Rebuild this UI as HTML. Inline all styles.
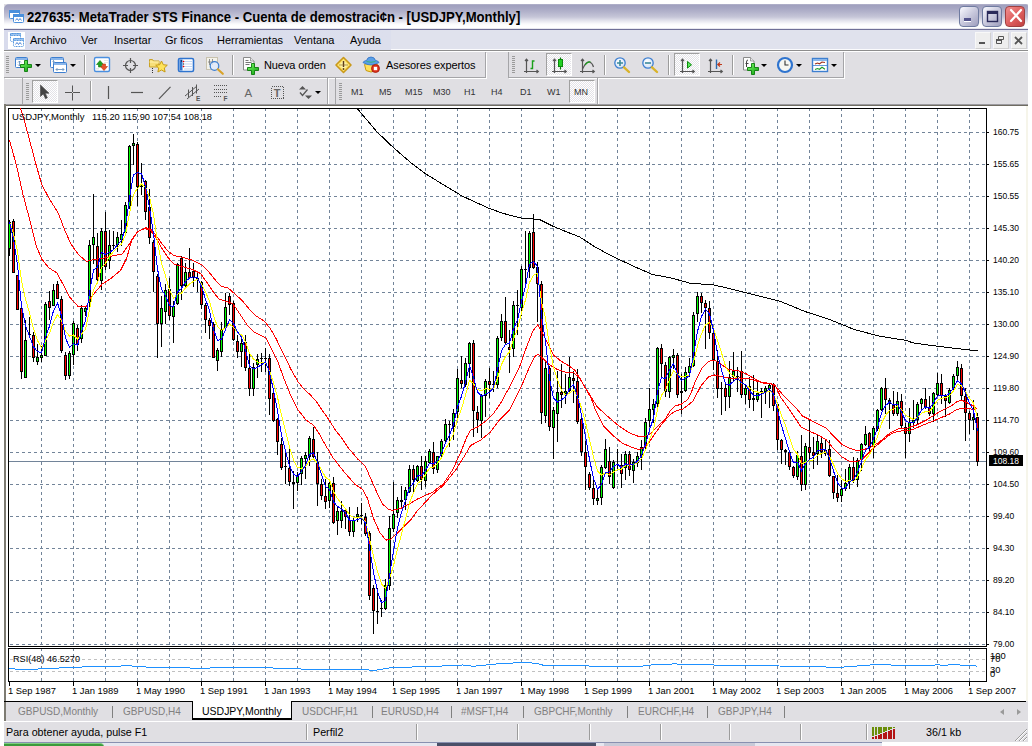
<!DOCTYPE html>
<html lang="es"><head><meta charset="utf-8"><title>227635: MetaTrader STS Finance</title>
<style>
*{box-sizing:border-box;margin:0;padding:0}
html,body{width:1032px;height:746px;overflow:hidden;background:#fff}
body{position:relative;font-family:"Liberation Sans",sans-serif;font-size:11px;color:#000}
.abs{position:absolute}
#win{position:absolute;left:4px;top:4px;width:1024px;height:738px;background:#e0dfe3}
#title{position:absolute;left:0;top:0;width:1024px;height:25px;background:linear-gradient(to bottom,#b4b4cc 0%,#a1a1bf 6%,#a6a6c3 16%,#b3b3cb 32%,#c6c6d8 52%,#e6e6ee 68%,#fafafc 80%,#ffffff 88%,#ffffff 94%,#dcdce6 100%);border-radius:5px 2px 0 0}
#title .txt{position:absolute;left:23px;top:4px;font-weight:bold;font-size:14px;line-height:18px;white-space:nowrap;color:#000;transform:scaleX(.9365);transform-origin:0 0}
#tline{position:absolute;left:0;top:25px;width:1024px;height:1px;background:#6f6f97}
.wbtn{position:absolute;top:2px;width:20px;height:21px;border-radius:4px;border:1px solid #6f7ba0;background:linear-gradient(135deg,#fafaff 0%,#c9c9dd 50%,#9e9ebd 100%)}
#menubar{position:absolute;left:0;top:26px;width:1024px;height:20px;background:#e0e2ed;border-bottom:1px solid #fbfbfd}
#menubar .bl{position:absolute;left:0;top:0;width:387px;height:20px;background:linear-gradient(to right,#d8dbec,#dcdfed)}
.mi{position:absolute;top:4px;font-size:11px;line-height:13px;white-space:nowrap}
.mdib{position:absolute;top:2px;width:16px;height:17px;background:#eeeeee;border:1px solid #f8f8f8;border-right-color:#d0d0d0;border-bottom-color:#d0d0d0}
#sep1{position:absolute;left:0;top:46px;width:1024px;height:1px;background:#8d8d8d}
#sep1b{position:absolute;left:0;top:47px;width:1024px;height:1px;background:#fff}
.tbgroup{position:absolute;height:26px;border-right:1px solid #a5a5a8;border-bottom:1px solid #a5a5a8;box-shadow:1px 1px 0 #fff}
.grip{position:absolute;width:3px;height:17px;background:repeating-linear-gradient(to bottom,#9a9a9a 0,#9a9a9a 1px,transparent 1px,transparent 2px)}
.vsep{position:absolute;width:1px;height:20px;background:#9c9c9c;box-shadow:1px 0 0 #fff}
.tbtxt{position:absolute;margin-top:1px;letter-spacing:-0.1px;font-size:11px;line-height:13px;white-space:nowrap}
.pressed{position:absolute;background:#f0f0f3 repeating-conic-gradient(#ffffff 0 25%,#e3e2e7 0 50%) 0 0/2px 2px;border:1px solid #a0a0a0;border-right-color:#fff;border-bottom-color:#fff}
.dd{position:absolute;width:0;height:0;border-left:3px solid transparent;border-right:3px solid transparent;border-top:3px solid #000}
.tf{position:absolute;font-size:9px;line-height:11px;color:#333;white-space:nowrap}
#chartwrap{position:absolute;left:0;top:100px;width:1024px;height:597px;background:#fff;border-left:2px solid #7d7b72;box-shadow:inset 0 1px 0 #9c9ba0,inset 0 2px 0 #6f6c62}
#tabs{position:absolute;left:0;top:697px;width:1022px;height:20px;background:#e0dfe3;border-top:1px solid #000;box-shadow:inset 2px 0 0 #7d7b72}
.tab{position:absolute;top:3px;font-size:11px;line-height:13px;color:#808080;white-space:nowrap;transform:scaleX(.91);transform-origin:0 0}
.tsep{position:absolute;top:4px;width:1px;height:12px;background:#808080}
#acttab{position:absolute;left:188px;top:-1px;width:100px;height:19px;background:#fff;border:1px solid #000;border-top:none;border-bottom-width:2px}
#acttab span{position:absolute;left:9px;top:4px;color:#000;font-size:11px;line-height:13px;white-space:nowrap;transform:scaleX(.953);transform-origin:0 0}
#status{position:absolute;left:0;top:717px;width:1024px;height:21px;background:#e0dfe3;border-top:1px solid #fff}
.st{position:absolute;top:4px;font-size:11px;line-height:13px;white-space:nowrap;transform:scaleX(.975);transform-origin:0 0}
.ssep{position:absolute;top:2px;width:1px;height:16px;background:#9c9c9c;box-shadow:1px 0 0 #fff}
svg{position:absolute;overflow:visible}
svg text{font-family:"Liberation Sans",sans-serif}

.sarr{position:absolute;top:7px;width:0;height:0;border-top:3px solid transparent;border-bottom:3px solid transparent}
#taskbar{position:absolute;left:4px;top:742px;width:878px;height:4px;background:#e6e7f0;border-top:1px solid #8890b0}
#taskbar i{position:absolute;top:0;height:4px;display:block}
#cream{position:absolute;left:1022px;top:102px;width:2px;height:595px;background:#f6f5ea}

</style></head>
<body>
<div id="win">
 <div id="title">
  <div class="txt">227635: MetaTrader STS Finance - Cuenta de demostraci&cent;n - [USDJPY,Monthly]</div>
  <div class="wbtn" style="left:955px"></div>
  <div class="wbtn" style="left:978px"></div>
  <div class="wbtn" style="left:1001px;border-color:#a04040;background:linear-gradient(135deg,#f09090 0%,#e06060 50%,#c04040 100%)"></div>
 </div>
 <div id="tline"></div>
 <div id="menubar">
  <div class="bl"></div>
  <div class="mi" style="left:26px">Archivo</div>
  <div class="mi" style="left:77px">Ver</div>
  <div class="mi" style="left:110px">Insertar</div>
  <div class="mi" style="left:161px">Gr&nbsp;ficos</div>
  <div class="mi" style="left:213px">Herramientas</div>
  <div class="mi" style="left:290px">Ventana</div>
  <div class="mi" style="left:346px">Ayuda</div>
  <div class="mdib" style="left:971px"></div>
  <div class="mdib" style="left:989px"></div>
  <div class="mdib" style="left:1007px"></div>
 </div>
 <div id="sep1"></div><div id="sep1b"></div>
 <div class="tbgroup" style="left:0;top:48px;width:482px"></div>
<div class="tbgroup" style="left:504px;top:48px;width:336px;border-left:1px solid #a5a5a8"></div>
<div class="tbgroup" style="left:18px;top:74px;width:306px;border-left:1px solid #a5a5a8;border-bottom:none;height:26px"></div>
<div class="tbgroup" style="left:331px;top:74px;width:263px;border-left:1px solid #a5a5a8;border-bottom:none;height:26px"></div>
<div class="grip" style="left:2px;top:52px"></div>
<div class="grip" style="left:508px;top:52px"></div>
<div class="grip" style="left:22px;top:79px"></div>
<div class="grip" style="left:335px;top:79px"></div>
<div class="vsep" style="left:80px;top:51px"></div>
<div class="vsep" style="left:228px;top:51px"></div>
<div class="vsep" style="left:600px;top:51px"></div>
<div class="vsep" style="left:664px;top:51px"></div>
<div class="vsep" style="left:728px;top:51px"></div>
<div class="vsep" style="left:86px;top:77px"></div>
<div class="pressed" style="left:542px;top:49px;width:26px;height:23px"></div>
<div class="pressed" style="left:670px;top:49px;width:26px;height:23px"></div>
<div class="pressed" style="left:28px;top:76px;width:26px;height:23px"></div>
<div class="pressed" style="left:565px;top:76px;width:26px;height:23px"></div>
<div class="tbtxt" style="left:260px;top:54px">Nueva orden</div>
<div class="tbtxt" style="left:382px;top:54px">Asesores expertos</div>
<div class="tf" style="left:347px;top:83px">M1</div>
<div class="tf" style="left:375px;top:83px">M5</div>
<div class="tf" style="left:401px;top:83px">M15</div>
<div class="tf" style="left:429px;top:83px">M30</div>
<div class="tf" style="left:460px;top:83px">H1</div>
<div class="tf" style="left:487px;top:83px">H4</div>
<div class="tf" style="left:516px;top:83px">D1</div>
<div class="tf" style="left:543px;top:83px">W1</div>
<div class="tf" style="left:570px;top:83px">MN</div>
<div class="dd" style="left:31px;top:60px"></div>
<div class="dd" style="left:66px;top:60px"></div>
<div class="dd" style="left:311px;top:87px"></div>
<div class="dd" style="left:757px;top:60px"></div>
<div class="dd" style="left:792px;top:60px"></div>
<div class="dd" style="left:827px;top:60px"></div>

 <div id="chartwrap"></div>
 <div id="tabs">
  <div class="tab" style="left:14px">GBPUSD,Monthly</div><div class="tsep" style="left:108px"></div>
  <div class="tab" style="left:119px">GBPUSD,H4</div>
  <div id="acttab"><span>USDJPY,Monthly</span></div>
  <div class="tab" style="left:298px">USDCHF,H1</div><div class="tsep" style="left:368px"></div>
  <div class="tab" style="left:377px">EURUSD,H4</div><div class="tsep" style="left:447px"></div>
  <div class="tab" style="left:457px">#MSFT,H4</div><div class="tsep" style="left:519px"></div>
  <div class="tab" style="left:530px">GBPCHF,Monthly</div><div class="tsep" style="left:623px"></div>
  <div class="tab" style="left:634px">EURCHF,H4</div><div class="tsep" style="left:703px"></div>
  <div class="tab" style="left:714px">GBPJPY,H4</div><div class="tsep" style="left:780px"></div>
  <div class="sarr" style="left:996px;border-right:4px solid #9a9a9a"></div>
  <div class="sarr" style="left:1013px;border-left:4px solid #9a9a9a"></div>
 </div>
 <div id="cream"></div>
 <div id="status">
  <div class="st" style="left:2px">Para obtener ayuda, pulse F1</div>
  <div class="ssep" style="left:302px"></div>
  <div class="st" style="left:309px">Perfil2</div>
  <div class="ssep" style="left:412px"></div>
  <div class="ssep" style="left:513px"></div>
  <div class="ssep" style="left:585px"></div>
  <div class="ssep" style="left:656px"></div>
  <div class="ssep" style="left:725px"></div>
  <div class="ssep" style="left:796px"></div>
  <div class="ssep" style="left:862px"></div>
  <div class="st" style="left:922px">36/1 kb</div>
 </div>
</div>
<div id="taskbar"><i style="left:0;width:100px;background:#3c9a3c;border-top:1px solid #7fd07f;border-radius:0 4px 0 0"></i><i style="left:433px;width:159px;background:#4a5068"></i><i style="left:600px;width:151px;background:#c8cad8"></i></div>
<svg width="1032" height="746" viewBox="0 0 1032 746" style="left:0;top:0" shape-rendering="crispEdges">
<path d="M41.5 108V646M41.5 648V681M73.5 108V646M73.5 648V681M105.5 108V646M105.5 648V681M137.5 108V646M137.5 648V681M169.5 108V646M169.5 648V681M201.5 108V646M201.5 648V681M233.5 108V646M233.5 648V681M265.5 108V646M265.5 648V681M297.5 108V646M297.5 648V681M329.5 108V646M329.5 648V681M361.5 108V646M361.5 648V681M393.5 108V646M393.5 648V681M425.5 108V646M425.5 648V681M457.5 108V646M457.5 648V681M489.5 108V646M489.5 648V681M521.5 108V646M521.5 648V681M553.5 108V646M553.5 648V681M585.5 108V646M585.5 648V681M617.5 108V646M617.5 648V681M649.5 108V646M649.5 648V681M681.5 108V646M681.5 648V681M713.5 108V646M713.5 648V681M745.5 108V646M745.5 648V681M777.5 108V646M777.5 648V681M809.5 108V646M809.5 648V681M841.5 108V646M841.5 648V681M873.5 108V646M873.5 648V681M905.5 108V646M905.5 648V681M937.5 108V646M937.5 648V681M969.5 108V646M969.5 648V681M10 132.5H986M10 164.5H986M10 196.5H986M10 228.5H986M10 260.5H986M10 292.5H986M10 324.5H986M10 356.5H986M10 388.5H986M10 420.5H986M10 452.5H986M10 484.5H986M10 516.5H986M10 548.5H986M10 580.5H986M10 612.5H986M10 644.5H986" stroke="#728499" stroke-width="1" stroke-dasharray="3 3" fill="none"/>
<path d="M10 659.5H986M10 671.5H986" stroke="#c0c0c0" stroke-width="1" stroke-dasharray="3 3" fill="none"/>
<rect x="9" y="461" width="977" height="1" fill="#728499"/>
<path d="M8.5 108.5H986.5V646.5H8.5ZM8.5 648.5H986.5V681.5H8.5Z" stroke="#000" stroke-width="1" fill="none"/>
<rect x="987" y="132" width="2" height="1" fill="#000"/>
<rect x="987" y="164" width="2" height="1" fill="#000"/>
<rect x="987" y="196" width="2" height="1" fill="#000"/>
<rect x="987" y="228" width="2" height="1" fill="#000"/>
<rect x="987" y="260" width="2" height="1" fill="#000"/>
<rect x="987" y="292" width="2" height="1" fill="#000"/>
<rect x="987" y="324" width="2" height="1" fill="#000"/>
<rect x="987" y="356" width="2" height="1" fill="#000"/>
<rect x="987" y="388" width="2" height="1" fill="#000"/>
<rect x="987" y="420" width="2" height="1" fill="#000"/>
<rect x="987" y="452" width="2" height="1" fill="#000"/>
<rect x="987" y="484" width="2" height="1" fill="#000"/>
<rect x="987" y="516" width="2" height="1" fill="#000"/>
<rect x="987" y="548" width="2" height="1" fill="#000"/>
<rect x="987" y="580" width="2" height="1" fill="#000"/>
<rect x="987" y="612" width="2" height="1" fill="#000"/>
<rect x="987" y="644" width="2" height="1" fill="#000"/>
<rect x="9" y="682" width="1" height="4" fill="#000"/>
<rect x="73" y="682" width="1" height="4" fill="#000"/>
<rect x="137" y="682" width="1" height="4" fill="#000"/>
<rect x="201" y="682" width="1" height="4" fill="#000"/>
<rect x="265" y="682" width="1" height="4" fill="#000"/>
<rect x="329" y="682" width="1" height="4" fill="#000"/>
<rect x="393" y="682" width="1" height="4" fill="#000"/>
<rect x="457" y="682" width="1" height="4" fill="#000"/>
<rect x="521" y="682" width="1" height="4" fill="#000"/>
<rect x="585" y="682" width="1" height="4" fill="#000"/>
<rect x="649" y="682" width="1" height="4" fill="#000"/>
<rect x="713" y="682" width="1" height="4" fill="#000"/>
<rect x="777" y="682" width="1" height="4" fill="#000"/>
<rect x="841" y="682" width="1" height="4" fill="#000"/>
<rect x="905" y="682" width="1" height="4" fill="#000"/>
<rect x="969" y="682" width="1" height="4" fill="#000"/>
<path d="M9 220h1v36h-1zM8 222h3v27h-3zM13 219h1v54h-1zM12 221h3v52h-3zM17 275h1v35h-1zM16 275h3v35h-3zM21 308h1v71h-1zM20 308h3v64h-3zM25 320h1v58h-1zM24 340h3v38h-3zM29 317h1v19h-1zM28 334h3v1h-3zM33 332h1v30h-1zM32 335h3v23h-3zM37 344h1v21h-1zM36 357h3v5h-3zM41 346h1v16h-1zM40 355h3v3h-3zM45 302h1v54h-1zM44 304h3v52h-3zM49 291h1v29h-1zM48 301h3v7h-3zM53 284h1v22h-1zM52 290h3v16h-3zM57 281h1v18h-1zM56 284h3v15h-3zM61 296h1v57h-1zM60 299h3v52h-3zM65 352h1v28h-1zM64 355h3v21h-3zM69 351h1v28h-1zM68 353h3v23h-3zM73 321h1v44h-1zM72 323h3v32h-3zM77 325h1v26h-1zM76 328h3v17h-3zM81 305h1v38h-1zM80 308h3v31h-3zM85 306h1v10h-1zM84 308h3v4h-3zM89 240h1v67h-1zM88 245h3v58h-3zM93 194h1v70h-1zM92 237h3v8h-3zM97 233h1v51h-1zM96 246h3v34h-3zM101 228h1v62h-1zM100 231h3v50h-3zM105 212h1v58h-1zM104 231h3v36h-3zM109 230h1v39h-1zM108 245h3v16h-3zM113 231h1v18h-1zM112 245h3v1h-3zM117 232h1v20h-1zM116 237h3v8h-3zM121 220h1v26h-1zM120 234h3v6h-3zM125 202h1v33h-1zM124 205h3v28h-3zM129 145h1v64h-1zM128 146h3v61h-3zM133 134h1v31h-1zM132 143h3v3h-3zM137 142h1v64h-1zM136 144h3v43h-3zM141 163h1v32h-1zM140 186h3v1h-3zM145 180h1v40h-1zM144 181h3v31h-3zM149 189h1v55h-1zM148 207h3v31h-3zM153 240h1v52h-1zM152 242h3v30h-3zM157 274h1v84h-1zM156 276h3v48h-3zM161 296h1v51h-1zM160 308h3v16h-3zM165 284h1v40h-1zM164 290h3v22h-3zM169 278h1v42h-1zM168 289h3v27h-3zM173 301h1v42h-1zM172 306h3v11h-3zM177 263h1v42h-1zM176 264h3v40h-3zM181 256h1v44h-1zM180 258h3v28h-3zM185 263h1v24h-1zM184 272h3v14h-3zM189 248h1v31h-1zM188 272h3v6h-3zM193 263h1v24h-1zM192 271h3v7h-3zM197 272h1v20h-1zM196 278h3v1h-3zM201 281h1v28h-1zM200 282h3v23h-3zM205 303h1v30h-1zM204 305h3v15h-3zM209 318h1v21h-1zM208 320h3v6h-3zM213 322h1v36h-1zM212 324h3v34h-3zM217 348h1v23h-1zM216 350h3v11h-3zM221 322h1v35h-1zM220 329h3v23h-3zM225 293h1v36h-1zM224 307h3v21h-3zM229 293h1v22h-1zM228 296h3v9h-3zM233 301h1v40h-1zM232 303h3v37h-3zM237 335h1v23h-1zM236 341h3v11h-3zM241 339h1v28h-1zM240 343h3v9h-3zM245 335h1v36h-1zM244 342h3v26h-3zM249 354h1v42h-1zM248 368h3v21h-3zM253 363h1v33h-1zM252 367h3v22h-3zM257 354h1v24h-1zM256 359h3v6h-3zM261 353h1v19h-1zM260 358h3v1h-3zM265 348h1v24h-1zM264 358h3v1h-3zM269 354h1v61h-1zM268 358h3v41h-3zM273 392h1v30h-1zM272 393h3v28h-3zM277 418h1v37h-1zM276 419h3v23h-3zM281 438h1v32h-1zM280 444h3v24h-3zM285 453h1v31h-1zM284 466h3v1h-3zM289 449h1v37h-1zM288 468h3v14h-3zM293 471h1v38h-1zM292 482h3v2h-3zM297 472h1v19h-1zM296 475h3v8h-3zM301 456h1v29h-1zM300 458h3v16h-3zM305 452h1v27h-1zM304 455h3v4h-3zM309 436h1v30h-1zM308 438h3v19h-3zM313 427h1v31h-1zM312 439h3v18h-3zM317 452h1v54h-1zM316 462h3v22h-3zM321 479h1v21h-1zM320 484h3v12h-3zM325 479h1v30h-1zM324 496h3v6h-3zM329 482h1v26h-1zM328 483h3v18h-3zM333 477h1v47h-1zM332 483h3v40h-3zM337 507h1v28h-1zM336 511h3v10h-3zM341 501h1v27h-1zM340 511h3v10h-3zM345 509h1v20h-1zM344 510h3v7h-3zM349 507h1v29h-1zM348 520h3v12h-3zM353 518h1v19h-1zM352 520h3v12h-3zM357 507h1v15h-1zM356 514h3v3h-3zM361 503h1v21h-1zM360 515h3v1h-3zM365 513h1v23h-1zM364 517h3v17h-3zM369 531h1v69h-1zM368 533h3v63h-3zM373 585h1v49h-1zM372 588h3v23h-3zM377 588h1v36h-1zM376 611h3v1h-3zM381 600h1v17h-1zM380 608h3v1h-3zM385 579h1v31h-1zM384 585h3v24h-3zM389 516h1v74h-1zM388 528h3v58h-3zM393 482h1v50h-1zM392 514h3v15h-3zM397 497h1v21h-1zM396 500h3v13h-3zM401 486h1v23h-1zM400 500h3v2h-3zM405 487h1v23h-1zM404 490h3v10h-3zM409 465h1v28h-1zM408 469h3v23h-3zM413 465h1v27h-1zM412 469h3v11h-3zM417 465h1v17h-1zM416 466h3v15h-3zM421 456h1v34h-1zM420 466h3v14h-3zM425 456h1v31h-1zM424 461h3v20h-3zM429 449h1v15h-1zM428 451h3v12h-3zM433 442h1v32h-1zM432 452h3v17h-3zM437 456h1v17h-1zM436 456h3v14h-3zM441 439h1v18h-1zM440 441h3v15h-3zM445 419h1v23h-1zM444 424h3v17h-3zM449 421h1v26h-1zM448 424h3v1h-3zM453 409h1v31h-1zM452 413h3v14h-3zM457 369h1v49h-1zM456 378h3v34h-3zM461 356h1v32h-1zM460 380h3v4h-3zM465 358h1v29h-1zM464 363h3v22h-3zM469 342h1v36h-1zM468 343h3v21h-3zM473 340h1v97h-1zM472 343h3v68h-3zM477 406h1v27h-1zM476 412h3v8h-3zM481 394h1v44h-1zM480 396h3v25h-3zM485 379h1v38h-1zM484 381h3v15h-3zM489 368h1v30h-1zM488 381h3v4h-3zM493 371h1v21h-1zM492 384h3v1h-3zM497 336h1v52h-1zM496 338h3v47h-3zM501 314h1v27h-1zM500 321h3v17h-3zM505 297h1v48h-1zM504 321h3v22h-3zM509 330h1v43h-1zM508 347h3v3h-3zM513 301h1v56h-1zM512 305h3v44h-3zM517 290h1v45h-1zM516 305h3v1h-3zM521 266h1v50h-1zM520 269h3v39h-3zM525 231h1v54h-1zM524 269h3v1h-3zM529 231h1v47h-1zM528 233h3v35h-3zM533 214h1v55h-1zM532 232h3v36h-3zM537 262h1v60h-1zM536 267h3v17h-3zM541 281h1v143h-1zM540 284h3v129h-3zM545 361h1v62h-1zM544 368h3v48h-3zM549 366h1v65h-1zM548 368h3v59h-3zM553 407h1v52h-1zM552 410h3v18h-3zM557 371h1v71h-1zM556 392h3v22h-3zM561 364h1v44h-1zM560 392h3v3h-3zM565 374h1v30h-1zM564 391h3v3h-3zM569 357h1v36h-1zM568 377h3v14h-3zM573 371h1v32h-1zM572 378h3v3h-3zM577 369h1v55h-1zM576 381h3v41h-3zM581 418h1v38h-1zM580 419h3v33h-3zM585 441h1v49h-1zM584 452h3v15h-3zM589 472h1v18h-1zM588 474h3v14h-3zM593 480h1v25h-1zM592 488h3v11h-3zM597 490h1v15h-1zM596 498h3v3h-3zM601 465h1v40h-1zM600 467h3v31h-3zM605 439h1v30h-1zM604 449h3v19h-3zM609 447h1v37h-1zM608 461h3v16h-3zM613 460h1v29h-1zM612 462h3v26h-3zM617 449h1v21h-1zM616 464h3v1h-3zM621 454h1v34h-1zM620 465h3v9h-3zM625 451h1v29h-1zM624 454h3v14h-3zM629 451h1v25h-1zM628 454h3v16h-3zM633 459h1v24h-1zM632 462h3v9h-3zM637 452h1v15h-1zM636 456h3v7h-3zM641 440h1v30h-1zM640 447h3v10h-3zM645 418h1v31h-1zM644 422h3v26h-3zM649 388h1v39h-1zM648 409h3v12h-3zM653 399h1v24h-1zM652 404h3v6h-3zM657 347h1v60h-1zM656 348h3v56h-3zM661 344h1v34h-1zM660 348h3v16h-3zM665 362h1v35h-1zM664 365h3v27h-3zM669 356h1v42h-1zM668 357h3v35h-3zM673 349h1v20h-1zM672 355h3v3h-3zM677 353h1v45h-1zM676 355h3v40h-3zM681 374h1v40h-1zM680 391h3v2h-3zM685 367h1v25h-1zM684 372h3v19h-3zM689 358h1v19h-1zM688 366h3v7h-3zM693 312h1v55h-1zM692 315h3v51h-3zM697 292h1v30h-1zM696 296h3v18h-3zM701 293h1v20h-1zM700 296h3v7h-3zM705 300h1v49h-1zM704 303h3v5h-3zM709 301h1v38h-1zM708 308h3v25h-3zM713 332h1v38h-1zM712 333h3v27h-3zM717 350h1v48h-1zM716 361h3v28h-3zM721 382h1v33h-1zM720 388h3v1h-3zM725 383h1v28h-1zM724 388h3v9h-3zM729 361h1v47h-1zM728 377h3v20h-3zM733 352h1v30h-1zM732 371h3v6h-3zM737 367h1v25h-1zM736 376h3v1h-3zM741 351h1v47h-1zM740 371h3v24h-3zM745 384h1v20h-1zM744 388h3v7h-3zM749 377h1v31h-1zM748 386h3v14h-3zM753 375h1v36h-1zM752 398h3v2h-3zM757 380h1v22h-1zM756 393h3v7h-3zM761 388h1v30h-1zM760 391h3v1h-3zM765 386h1v18h-1zM764 388h3v4h-3zM769 383h1v25h-1zM768 385h3v4h-3zM773 383h1v28h-1zM772 384h3v22h-3zM777 403h1v47h-1zM776 404h3v36h-3zM781 439h1v25h-1zM780 440h3v10h-3zM785 449h1v16h-1zM784 450h3v2h-3zM789 451h1v19h-1zM788 452h3v15h-3zM793 466h1v12h-1zM792 467h3v9h-3zM797 451h1v29h-1zM796 455h3v22h-3zM801 435h1v56h-1zM800 456h3v29h-3zM805 443h1v47h-1zM804 446h3v39h-3zM809 420h1v40h-1zM808 447h3v6h-3zM813 437h1v32h-1zM812 452h3v4h-3zM817 434h1v31h-1zM816 441h3v13h-3zM821 436h1v22h-1zM820 443h3v9h-3zM825 439h1v17h-1zM824 450h3v4h-3zM829 440h1v37h-1zM828 449h3v27h-3zM833 476h1v23h-1zM832 476h3v17h-3zM837 475h1v27h-1zM836 493h3v5h-3zM841 480h1v22h-1zM840 489h3v7h-3zM845 469h1v22h-1zM844 483h3v6h-3zM849 464h1v25h-1zM848 467h3v15h-3zM853 457h1v26h-1zM852 467h3v14h-3zM857 458h1v29h-1zM856 460h3v20h-3zM861 443h1v28h-1zM860 444h3v16h-3zM865 426h1v20h-1zM864 434h3v11h-3zM869 432h1v21h-1zM868 433h3v15h-3zM873 426h1v32h-1zM872 428h3v19h-3zM877 409h1v22h-1zM876 410h3v19h-3zM881 387h1v24h-1zM880 388h3v22h-3zM885 378h1v36h-1zM884 388h3v12h-3zM889 398h1v31h-1zM888 400h3v4h-3zM893 391h1v25h-1zM892 405h3v9h-3zM897 392h1v24h-1zM896 401h3v13h-3zM901 394h1v34h-1zM900 401h3v25h-3zM905 423h1v35h-1zM904 427h3v7h-3zM909 408h1v34h-1zM908 422h3v12h-3zM913 400h1v28h-1zM912 420h3v3h-3zM917 402h1v22h-1zM916 404h3v16h-3zM921 398h1v12h-1zM920 399h3v5h-3zM925 388h1v21h-1zM924 399h3v8h-3zM929 396h1v20h-1zM928 407h3v7h-3zM933 392h1v30h-1zM932 393h3v21h-3zM937 373h1v24h-1zM936 383h3v12h-3zM941 374h1v30h-1zM940 383h3v13h-3zM945 394h1v23h-1zM944 396h3v5h-3zM949 388h1v16h-1zM948 390h3v13h-3zM953 374h1v18h-1zM952 376h3v14h-3zM957 361h1v21h-1zM956 367h3v9h-3zM961 364h1v37h-1zM960 368h3v28h-3zM965 388h1v53h-1zM964 396h3v17h-3zM969 411h1v23h-1zM968 413h3v7h-3zM973 400h1v30h-1zM972 417h3v3h-3zM977 413h1v53h-1zM976 417h3v45h-3z" fill="#000"/>
<path d="M9 223h1v25h-1zM25 341h1v36h-1zM37 358h1v3h-1zM41 356h1v1h-1zM45 305h1v50h-1zM53 291h1v14h-1zM69 354h1v21h-1zM73 324h1v30h-1zM81 309h1v29h-1zM85 309h1v2h-1zM89 246h1v56h-1zM93 238h1v6h-1zM101 232h1v48h-1zM109 246h1v14h-1zM117 238h1v6h-1zM121 235h1v4h-1zM125 206h1v26h-1zM129 147h1v59h-1zM133 144h1v1h-1zM161 309h1v14h-1zM165 291h1v20h-1zM173 307h1v9h-1zM177 265h1v38h-1zM185 273h1v12h-1zM217 351h1v9h-1zM221 330h1v21h-1zM225 308h1v19h-1zM241 344h1v7h-1zM253 368h1v20h-1zM257 360h1v4h-1zM297 476h1v6h-1zM301 459h1v14h-1zM305 456h1v2h-1zM309 439h1v17h-1zM329 484h1v16h-1zM337 512h1v8h-1zM341 512h1v8h-1zM353 521h1v10h-1zM357 515h1v1h-1zM385 586h1v22h-1zM389 529h1v56h-1zM393 515h1v13h-1zM397 501h1v11h-1zM405 491h1v8h-1zM409 470h1v21h-1zM417 467h1v13h-1zM425 462h1v18h-1zM429 452h1v10h-1zM437 457h1v12h-1zM441 442h1v13h-1zM445 425h1v15h-1zM453 414h1v12h-1zM457 379h1v32h-1zM465 364h1v20h-1zM469 344h1v19h-1zM481 397h1v23h-1zM485 382h1v13h-1zM497 339h1v45h-1zM501 322h1v15h-1zM513 306h1v42h-1zM521 270h1v37h-1zM529 234h1v33h-1zM545 369h1v46h-1zM553 411h1v16h-1zM557 393h1v20h-1zM565 392h1v1h-1zM569 378h1v12h-1zM597 499h1v1h-1zM601 468h1v29h-1zM605 450h1v17h-1zM613 463h1v24h-1zM625 455h1v12h-1zM633 463h1v7h-1zM637 457h1v5h-1zM641 448h1v8h-1zM645 423h1v24h-1zM649 410h1v10h-1zM653 405h1v4h-1zM657 349h1v54h-1zM669 358h1v33h-1zM673 356h1v1h-1zM685 373h1v17h-1zM689 367h1v5h-1zM693 316h1v49h-1zM697 297h1v16h-1zM729 378h1v18h-1zM733 372h1v4h-1zM745 389h1v5h-1zM757 394h1v5h-1zM765 389h1v2h-1zM769 386h1v2h-1zM797 456h1v20h-1zM805 447h1v37h-1zM817 442h1v11h-1zM825 451h1v2h-1zM841 490h1v5h-1zM845 484h1v4h-1zM849 468h1v13h-1zM857 461h1v18h-1zM861 445h1v14h-1zM865 435h1v9h-1zM873 429h1v17h-1zM877 411h1v17h-1zM881 389h1v20h-1zM897 402h1v11h-1zM909 423h1v10h-1zM913 421h1v1h-1zM917 405h1v14h-1zM921 400h1v3h-1zM933 394h1v19h-1zM937 384h1v10h-1zM949 391h1v11h-1zM953 377h1v12h-1zM957 368h1v7h-1zM973 418h1v1h-1z" fill="#00ff00"/>
<path d="M13 222h1v50h-1zM17 276h1v33h-1zM21 309h1v62h-1zM33 336h1v21h-1zM49 302h1v5h-1zM57 285h1v13h-1zM61 300h1v50h-1zM65 356h1v19h-1zM77 329h1v15h-1zM97 247h1v32h-1zM105 232h1v34h-1zM137 145h1v41h-1zM145 182h1v29h-1zM149 208h1v29h-1zM153 243h1v28h-1zM157 277h1v46h-1zM169 290h1v25h-1zM181 259h1v26h-1zM189 273h1v4h-1zM193 272h1v5h-1zM201 283h1v21h-1zM205 306h1v13h-1zM209 321h1v4h-1zM213 325h1v32h-1zM229 297h1v7h-1zM233 304h1v35h-1zM237 342h1v9h-1zM245 343h1v24h-1zM249 369h1v19h-1zM269 359h1v39h-1zM273 394h1v26h-1zM277 420h1v21h-1zM281 445h1v22h-1zM289 469h1v12h-1zM313 440h1v16h-1zM317 463h1v20h-1zM321 485h1v10h-1zM325 497h1v4h-1zM333 484h1v38h-1zM345 511h1v5h-1zM349 521h1v10h-1zM365 518h1v15h-1zM369 534h1v61h-1zM373 589h1v21h-1zM413 470h1v9h-1zM421 467h1v12h-1zM433 453h1v15h-1zM461 381h1v2h-1zM473 344h1v66h-1zM477 413h1v6h-1zM489 382h1v2h-1zM505 322h1v20h-1zM509 348h1v1h-1zM533 233h1v34h-1zM537 268h1v15h-1zM541 285h1v127h-1zM549 369h1v57h-1zM561 393h1v1h-1zM573 379h1v1h-1zM577 382h1v39h-1zM581 420h1v31h-1zM585 453h1v13h-1zM589 475h1v12h-1zM593 489h1v9h-1zM609 462h1v14h-1zM621 466h1v7h-1zM629 455h1v14h-1zM661 349h1v14h-1zM665 366h1v25h-1zM677 356h1v38h-1zM701 297h1v5h-1zM705 304h1v3h-1zM709 309h1v23h-1zM713 334h1v25h-1zM717 362h1v26h-1zM725 389h1v7h-1zM741 372h1v22h-1zM749 387h1v12h-1zM773 385h1v20h-1zM777 405h1v34h-1zM781 441h1v8h-1zM789 453h1v13h-1zM793 468h1v7h-1zM801 457h1v27h-1zM809 448h1v4h-1zM813 453h1v2h-1zM821 444h1v7h-1zM829 450h1v25h-1zM833 477h1v15h-1zM837 494h1v3h-1zM853 468h1v12h-1zM869 434h1v13h-1zM885 389h1v10h-1zM889 401h1v2h-1zM893 406h1v7h-1zM901 402h1v23h-1zM905 428h1v5h-1zM925 400h1v6h-1zM929 408h1v5h-1zM941 384h1v11h-1zM945 397h1v3h-1zM961 369h1v26h-1zM965 397h1v15h-1zM969 414h1v5h-1zM977 418h1v43h-1z" fill="#ff0000"/>
<g shape-rendering="crispEdges">
<polyline points="357.1,108.4 377.3,132.2 392.8,147.0 411.5,163.3 426.3,174.2 442.6,184.3 462.0,196.0 489.2,208.4 501.5,212.8 508.9,215.0 520.5,218.0 539.3,219.4 554.0,226.7 570.4,233.4 579.5,236.8 593.5,246.0 609.2,254.7 621.5,260.6 639.3,268.8 652.8,274.6 670.3,277.7 689.6,283.1 700.5,284.0 712.9,284.7 732.3,289.3 745.8,292.7 780.5,301.4 805.0,311.5 829.5,319.5 853.8,329.3 878.2,335.9 906.1,340.4 913.0,342.9 940.9,346.7 977.5,350.9" fill="none" stroke="#000" stroke-width="1"/>
<polyline points="20.5,108.0 24.2,120.0 30.4,143.3 36.6,166.7 42.0,185.3 50.6,200.9 58.4,213.3 64.6,229.9 70.8,243.9 78.6,254.8 86.4,261.3 94.1,259.4 105.0,257.9 114.4,255.5 122.1,254.0 128.4,245.4 133.0,237.7 139.2,230.7 146.2,227.5 151.7,230.0 157.9,238.0 161.5,243.1 167.7,250.9 173.9,255.6 181.7,257.1 192.6,260.2 201.9,264.9 208.2,271.1 214.4,278.9 220.6,285.9 228.4,288.2 234.6,293.7 242.4,300.7 248.6,308.4 256.4,316.2 264.1,320.9 270.4,328.6 276.6,339.5 279.3,345.9 285.5,358.3 291.7,370.8 297.9,381.7 304.1,389.4 310.4,394.9 316.6,401.9 322.8,411.2 329.0,419.8 335.2,429.9 341.5,437.6 348.6,448.3 357.9,459.2 365.7,467.0 370.4,477.9 376.6,491.9 382.8,504.3 389.0,509.8 393.7,510.2 401.5,508.0 409.2,504.0 417.1,499.2 432.6,492.2 443.5,483.6 452.8,469.6 460.6,452.5 466.8,437.0 470.7,430.0 477.7,426.9 485.5,421.4 492.8,414.5 500.6,403.3 509.9,386.2 519.3,367.5 527.0,345.8 533.3,330.2 537.9,324.8 542.6,333.3 548.8,345.8 553.5,355.1 561.3,361.3 569.0,366.0 575.3,370.7 581.5,381.5 589.3,394.0 597.3,407.0 608.2,416.8 619.0,426.1 629.9,433.1 639.3,436.7 643.9,437.0 650.1,433.9 657.9,426.1 665.7,418.3 670.4,410.6 675.0,405.9 681.2,404.3 687.5,399.7 691.5,392.0 694.6,383.0 702.4,367.4 708.6,361.2 714.8,360.4 721.0,364.3 728.8,369.8 738.1,370.5 745.9,373.6 753.7,378.3 761.5,382.2 769.2,383.3 774.6,385.0 782.4,394.3 790.1,402.1 796.4,408.3 802.6,416.1 810.4,420.0 818.1,423.9 825.9,427.8 833.7,436.3 841.5,444.1 849.2,448.0 855.5,450.3 861.5,450.0 868.4,448.3 879.3,442.1 890.2,432.8 897.9,428.9 907.3,428.1 916.6,425.0 925.9,420.3 938.4,412.5 950.8,406.3 957.0,401.7 961.7,400.1 967.9,403.2 974.1,406.3 977.2,409.4" fill="none" stroke="#ff0000" stroke-width="1"/>
<polyline points="9.5,140.2 16.4,165.1 22.6,193.1 28.8,216.4 31.9,228.3 36.6,247.0 42.0,259.4 49.0,268.0 56.8,272.7 63.0,284.3 69.3,296.8 77.8,306.1 86.4,306.1 90.3,298.3 94.1,293.6 101.9,284.3 111.3,278.1 120.6,270.3 126.8,257.9 131.5,240.8 137.7,231.4 145.5,228.5 150.9,231.0 156.4,238.5 161.5,247.8 167.7,257.1 173.9,264.1 181.7,266.4 192.6,269.5 200.4,273.4 206.6,282.0 212.8,291.3 219.0,299.1 226.8,301.7 233.0,303.8 239.3,313.1 247.0,324.8 254.8,332.5 259.8,335.0 266.0,338.1 271.5,349.0 277.7,361.4 283.9,378.5 290.1,394.1 297.9,409.6 305.7,419.8 313.5,425.2 319.7,434.5 323.7,442.1 333.0,457.7 343.9,471.7 354.8,484.1 362.6,489.5 367.3,498.1 373.5,518.3 379.7,532.3 385.9,540.1 390.6,539.3 401.5,529.2 410.8,519.9 417.1,511.0 432.6,494.5 443.5,485.2 455.9,469.6 463.7,457.2 470.7,445.5 480.8,440.1 490.1,432.3 499.5,419.9 509.9,409.5 520.8,387.8 528.6,369.1 534.8,356.7 537.9,354.3 542.6,358.2 548.8,364.4 556.6,369.1 565.9,372.2 573.7,373.0 579.9,378.4 586.1,389.3 591.5,399.0 595.7,410.6 603.5,426.1 612.8,435.4 622.2,443.2 631.5,447.1 637.7,449.4 642.4,448.7 648.6,443.2 654.8,433.9 662.6,423.0 670.4,414.4 676.6,410.6 682.8,409.0 689.0,404.3 693.0,401.0 700.8,386.1 708.6,376.8 714.8,374.9 722.6,376.8 730.4,378.3 739.7,378.0 747.5,378.3 755.2,380.6 763.0,383.0 770.8,383.8 775.5,386.1 780.8,397.4 788.6,408.3 794.8,417.7 801.0,427.0 808.8,430.9 818.1,435.1 825.9,439.4 833.7,448.8 841.5,456.5 849.2,461.2 855.5,462.0 862.2,459.2 871.5,449.9 880.8,442.1 890.2,434.3 897.9,431.2 910.4,430.4 919.7,426.5 929.0,422.7 938.4,418.8 949.3,414.1 957.0,409.4 963.3,408.2 969.5,408.7 975.7,410.2" fill="none" stroke="#ff0000" stroke-width="1"/>
<polyline points="9.5,222.0 13.5,233.3 17.5,251.5 21.5,280.9 25.5,299.1 29.5,312.9 33.5,328.7 37.5,340.5 41.5,348.1 45.5,340.6 49.5,333.2 53.5,321.9 57.5,314.8 61.5,320.4 65.5,331.1 69.5,336.2 73.5,334.8 77.5,339.1 81.5,334.1 85.5,329.1 89.5,309.5 93.5,289.7 97.5,282.6 101.5,267.3 105.5,263.4 109.5,256.2 113.5,251.7 117.5,247.2 121.5,244.0 125.5,234.7 129.5,213.1 133.5,194.6 137.5,188.3 141.5,184.1 145.5,187.2 149.5,197.0 153.5,214.4 157.5,242.2 161.5,263.2 165.5,275.8 169.5,289.9 173.5,298.3 177.5,294.1 181.5,293.2 185.5,287.9 189.5,284.0 193.5,281.3 197.5,279.5 201.5,284.0 205.5,292.1 209.5,301.2 213.5,315.7 217.5,326.4 221.5,330.2 225.5,327.8 229.5,324.1 233.5,327.4 237.5,332.5 241.5,334.6 245.5,341.8 249.5,353.4 253.5,359.1 257.5,361.9 261.5,363.0 265.5,362.7 269.5,371.0 273.5,382.8 277.5,397.2 281.5,415.3 285.5,430.7 289.5,447.0 293.5,459.8 297.5,467.6 301.5,468.4 305.5,466.9 309.5,460.7 313.5,458.8 317.5,463.2 321.5,469.8 325.5,477.4 329.5,480.1 333.5,491.5 337.5,498.5 341.5,503.9 345.5,508.6 349.5,514.9 353.5,517.3 357.5,517.6 361.5,517.9 365.5,521.5 369.5,538.5 373.5,556.6 377.5,571.8 381.5,583.8 385.5,588.5 389.5,578.8 393.5,565.6 397.5,549.3 401.5,533.9 405.5,519.0 409.5,502.8 413.5,492.9 417.5,483.6 421.5,480.6 425.5,474.7 429.5,468.1 433.5,466.9 437.5,463.6 441.5,457.9 445.5,449.2 449.5,442.1 453.5,433.8 457.5,419.4 461.5,408.8 465.5,395.3 469.5,380.3 473.5,383.6 477.5,389.7 481.5,390.6 485.5,388.9 489.5,389.1 493.5,388.8 497.5,378.2 501.5,364.6 505.5,356.5 509.5,351.8 513.5,339.1 517.5,328.9 521.5,312.8 525.5,300.0 529.5,282.3 533.5,275.3 537.5,273.4 541.5,301.8 545.5,318.4 549.5,346.3 553.5,367.1 557.5,380.0 561.5,390.2 565.5,394.9 569.5,393.1 573.5,389.7 577.5,396.2 581.5,407.9 585.5,422.2 589.5,439.6 593.5,456.8 597.5,470.9 601.5,475.1 605.5,472.9 609.5,474.9 613.5,472.1 617.5,469.5 621.5,469.1 625.5,464.8 629.5,465.2 633.5,464.6 637.5,462.8 641.5,458.8 645.5,450.1 649.5,439.7 653.5,429.6 657.5,409.1 661.5,395.0 665.5,390.1 669.5,379.4 673.5,371.0 677.5,374.0 681.5,376.9 685.5,376.1 689.5,374.8 693.5,361.7 697.5,345.7 701.5,333.9 705.5,324.8 709.5,322.5 713.5,328.0 717.5,340.7 721.5,352.8 725.5,366.2 729.5,372.9 733.5,376.1 737.5,378.4 741.5,383.1 745.5,384.6 749.5,387.9 753.5,390.9 757.5,392.0 761.5,392.8 765.5,392.5 769.5,391.1 773.5,394.1 777.5,404.3 781.5,415.3 785.5,425.4 789.5,437.4 793.5,449.3 797.5,454.2 801.5,463.9 805.5,462.1 809.5,460.8 813.5,459.8 817.5,455.3 821.5,453.6 825.5,451.8 829.5,456.5 833.5,464.4 837.5,473.2 841.5,478.6 845.5,481.6 849.5,480.4 853.5,481.5 857.5,477.1 861.5,468.9 865.5,459.4 869.5,454.6 873.5,446.8 877.5,436.6 881.5,423.6 885.5,415.5 889.5,410.5 893.5,409.3 897.5,406.0 901.5,409.2 905.5,414.8 909.5,417.5 913.5,419.5 917.5,417.0 921.5,413.3 925.5,411.6 929.5,411.5 933.5,406.5 937.5,400.1 941.5,398.1 945.5,397.8 949.5,395.7 953.5,390.8 957.5,384.6 961.5,385.9 965.5,391.6 969.5,398.2 973.5,403.1 977.5,417.4" fill="none" stroke="#ffff00" stroke-width="1"/>
<polyline points="9.5,222.0 13.5,239.0 17.5,264.9 21.5,305.7 25.5,325.7 29.5,336.3 33.5,346.9 37.5,351.6 41.5,352.5 45.5,337.5 49.5,326.2 53.5,310.7 57.5,302.8 61.5,316.1 65.5,337.9 69.5,347.3 73.5,343.7 77.5,345.3 81.5,331.4 85.5,320.4 89.5,292.9 93.5,270.0 97.5,267.1 101.5,252.3 105.5,254.5 109.5,252.2 113.5,249.9 117.5,244.3 121.5,240.7 125.5,227.1 129.5,198.1 133.5,174.6 137.5,172.6 141.5,173.6 145.5,186.5 149.5,207.5 153.5,233.8 157.5,268.8 161.5,289.3 165.5,295.7 169.5,305.6 173.5,306.9 177.5,292.0 181.5,288.4 185.5,281.6 189.5,278.0 193.5,276.9 197.5,277.7 201.5,286.6 205.5,299.2 209.5,310.6 213.5,329.5 217.5,340.3 221.5,339.4 225.5,329.5 229.5,319.9 233.5,323.3 237.5,331.9 241.5,337.3 245.5,350.2 249.5,366.0 253.5,368.9 257.5,367.3 261.5,364.9 265.5,361.5 269.5,372.4 273.5,390.0 277.5,411.0 281.5,435.1 285.5,451.3 289.5,465.5 293.5,474.3 297.5,476.6 301.5,471.1 305.5,465.2 309.5,454.4 313.5,452.9 317.5,462.0 321.5,474.5 325.5,486.5 329.5,489.1 333.5,501.9 337.5,506.4 341.5,509.1 345.5,512.7 349.5,520.4 353.5,520.8 357.5,519.4 361.5,518.1 365.5,522.9 369.5,547.3 373.5,572.3 377.5,591.3 381.5,602.9 385.5,600.5 389.5,575.8 393.5,550.9 397.5,527.9 401.5,512.2 405.5,500.4 409.5,487.9 413.5,483.1 417.5,475.8 421.5,475.5 425.5,470.1 429.5,463.4 433.5,463.9 437.5,460.7 441.5,453.3 445.5,442.7 449.5,434.7 453.5,424.7 457.5,406.9 461.5,396.2 465.5,382.3 469.5,365.9 473.5,377.5 477.5,392.2 481.5,396.1 485.5,394.3 489.5,392.5 493.5,387.7 497.5,369.3 501.5,350.7 505.5,344.4 509.5,343.0 513.5,328.9 517.5,320.1 521.5,301.5 525.5,286.4 529.5,264.2 533.5,261.5 537.5,266.5 541.5,316.0 545.5,340.9 549.5,378.8 553.5,398.1 557.5,402.0 561.5,399.7 565.5,397.2 569.5,388.5 573.5,384.5 577.5,396.1 581.5,415.7 585.5,436.5 589.5,459.3 593.5,478.3 597.5,489.1 601.5,484.5 605.5,472.9 609.5,471.8 613.5,466.5 617.5,464.3 621.5,467.7 625.5,463.9 629.5,465.2 633.5,464.3 637.5,461.3 641.5,455.9 645.5,444.0 649.5,429.9 653.5,418.1 657.5,391.6 661.5,377.6 665.5,378.5 669.5,369.7 673.5,363.7 677.5,374.3 681.5,380.4 685.5,378.4 689.5,375.7 693.5,355.5 697.5,331.5 701.5,316.5 705.5,309.1 709.5,314.2 713.5,330.5 717.5,353.5 721.5,370.0 725.5,383.8 729.5,385.0 733.5,381.3 737.5,378.5 741.5,382.9 745.5,384.5 749.5,390.7 753.5,395.3 757.5,395.7 761.5,394.3 765.5,392.2 769.5,389.1 773.5,393.9 777.5,409.7 781.5,425.7 785.5,438.5 789.5,451.9 793.5,462.9 797.5,462.3 801.5,470.6 805.5,463.6 809.5,459.3 813.5,457.0 817.5,451.0 821.5,449.6 825.5,449.7 829.5,458.3 833.5,470.9 837.5,482.8 841.5,487.9 845.5,488.5 849.5,481.5 853.5,479.9 857.5,472.0 861.5,461.3 865.5,450.3 869.5,447.3 873.5,438.8 877.5,427.9 881.5,412.9 885.5,405.7 889.5,402.1 893.5,404.8 897.5,404.1 901.5,412.3 905.5,420.6 909.5,422.7 913.5,422.9 917.5,417.3 921.5,409.9 925.5,407.0 929.5,408.2 933.5,402.9 937.5,396.1 941.5,395.1 945.5,395.9 949.5,393.4 953.5,387.9 957.5,380.5 961.5,383.8 965.5,392.8 969.5,403.3 973.5,410.9 977.5,430.7" fill="none" stroke="#0000ff" stroke-width="1"/>
</g>
<polyline points="9.5,668.2 20.5,669.9 75.1,667.2 129.3,665.8 153.0,667.5 203.9,668.2 237.8,667.2 281.5,668.2 305.5,669.2 340.5,669.1 375.4,670.2 392.8,667.4 427.7,666.7 462.6,665.0 473.0,666.3 497.5,663.9 521.9,662.5 535.8,663.2 546.3,666.0 584.7,665.6 595.1,666.7 640.5,666.3 654.4,664.6 675.3,663.9 689.3,664.6 744.2,665.5 779.1,666.0 840.3,667.3 875.3,664.6 910.2,665.5 932.5,665.6 938.9,664.2 940.5,665.6 947.5,665.6 948.6,664.2 959.3,664.2 960.9,665.6 975.4,665.6 977.3,666.7" fill="none" stroke="#1e90ff" stroke-width="1"/>
<rect x="989" y="455" width="34" height="11" fill="#000"/>
<g font-size="9.4" fill="#000" style="font-family:'Liberation Sans',sans-serif" text-rendering="optimizeLegibility"><text x="993" y="135" textLength="26" lengthAdjust="spacingAndGlyphs">160.75</text><text x="993" y="167" textLength="26" lengthAdjust="spacingAndGlyphs">155.65</text><text x="993" y="199" textLength="26" lengthAdjust="spacingAndGlyphs">150.55</text><text x="993" y="231" textLength="26" lengthAdjust="spacingAndGlyphs">145.30</text><text x="993" y="263" textLength="26" lengthAdjust="spacingAndGlyphs">140.20</text><text x="993" y="295" textLength="26" lengthAdjust="spacingAndGlyphs">135.10</text><text x="993" y="327" textLength="26" lengthAdjust="spacingAndGlyphs">130.00</text><text x="993" y="359" textLength="26" lengthAdjust="spacingAndGlyphs">124.90</text><text x="993" y="391" textLength="26" lengthAdjust="spacingAndGlyphs">119.80</text><text x="993" y="423" textLength="26" lengthAdjust="spacingAndGlyphs">114.70</text><text x="993" y="455" textLength="26" lengthAdjust="spacingAndGlyphs">109.60</text><text x="993" y="487" textLength="26" lengthAdjust="spacingAndGlyphs">104.50</text><text x="993" y="519" textLength="21.300" lengthAdjust="spacingAndGlyphs">99.40</text><text x="993" y="551" textLength="21.300" lengthAdjust="spacingAndGlyphs">94.30</text><text x="993" y="583" textLength="21.300" lengthAdjust="spacingAndGlyphs">89.20</text><text x="993" y="615" textLength="21.300" lengthAdjust="spacingAndGlyphs">84.10</text><text x="993" y="647" textLength="21.300" lengthAdjust="spacingAndGlyphs">79.00</text><text x="8" y="694" font-size="9.400">1 Sep 1987</text><text x="72" y="694" font-size="9.400">1 Jan 1989</text><text x="136" y="694" font-size="9.400">1 May 1990</text><text x="200" y="694" font-size="9.400">1 Sep 1991</text><text x="264" y="694" font-size="9.400">1 Jan 1993</text><text x="328" y="694" font-size="9.400">1 May 1994</text><text x="392" y="694" font-size="9.400">1 Sep 1995</text><text x="456" y="694" font-size="9.400">1 Jan 1997</text><text x="520" y="694" font-size="9.400">1 May 1998</text><text x="584" y="694" font-size="9.400">1 Sep 1999</text><text x="648" y="694" font-size="9.400">1 Jan 2001</text><text x="712" y="694" font-size="9.400">1 May 2002</text><text x="776" y="694" font-size="9.400">1 Sep 2003</text><text x="840" y="694" font-size="9.400">1 Jan 2005</text><text x="904" y="694" font-size="9.400">1 May 2006</text><text x="968" y="694" font-size="9.400">1 Sep 2007</text>
<text x="993" y="464" fill="#fff" textLength="26" lengthAdjust="spacingAndGlyphs">108.18</text>
<text x="12" y="120" textLength="72.500" lengthAdjust="spacingAndGlyphs">USDJPY,Monthly</text><text x="92" y="120" textLength="120" lengthAdjust="spacingAndGlyphs">115.20 115.90 107.54 108.18</text>
<text x="13" y="662" textLength="67" lengthAdjust="spacingAndGlyphs">RSI(48) 46.5270</text>
<text x="990" y="658.500">100</text><text x="990" y="662">70</text><text x="990" y="672.500">30</text><text x="990" y="677">0</text>
</g>
</svg>
<svg width="1032" height="110" viewBox="0 0 1032 110" style="left:0;top:0">
<defs>
<linearGradient id="gplus" x1="0" y1="0" x2="1" y2="1"><stop offset="0" stop-color="#7dff6a"/><stop offset="1" stop-color="#0a9a0a"/></linearGradient>
<linearGradient id="gblue" x1="0" y1="0" x2="0" y2="1"><stop offset="0" stop-color="#6aa6ea"/><stop offset="1" stop-color="#2f6fc4"/></linearGradient>
<radialGradient id="glens" cx="0.4" cy="0.35" r="0.7"><stop offset="0" stop-color="#ffffff"/><stop offset="1" stop-color="#cfe0f6"/></radialGradient>
</defs>
<!-- app icons title + menu -->
<g id="appico">
 <rect x="9.5" y="10.5" width="10" height="8" rx="1" fill="#fff" stroke="#4a90dc"/>
 <rect x="9.5" y="10.5" width="10" height="2" fill="#4a90dc" stroke="#4a90dc"/>
 <rect x="13.5" y="14.5" width="10" height="8" rx="1" fill="#fff" stroke="#4a90dc"/>
 <rect x="13.5" y="14.5" width="10" height="2" fill="#4a90dc" stroke="#4a90dc"/>
 <path d="M15.5 20.5l1.5-2 1.5 2 1.5-2 1.5 2" fill="none" stroke="#3a7bd5" stroke-width="0.9"/>
</g>
<rect x="8" y="32" width="17" height="17" fill="#fff"/>
<g>
 <rect x="10.5" y="33.5" width="10" height="8" rx="1" fill="#fff" stroke="#4a90dc" stroke-dasharray="1 0.6"/>
 <rect x="10.5" y="33.5" width="10" height="2" fill="#9cc4f0" stroke="#4a90dc" stroke-dasharray="1 0.6"/>
 <rect x="13.5" y="38.5" width="10" height="8" rx="1" fill="#fff" stroke="#4a90dc" stroke-dasharray="1 0.6"/>
 <rect x="13.5" y="38.5" width="10" height="2" fill="#9cc4f0" stroke="#4a90dc" stroke-dasharray="1 0.6"/>
 <path d="M15.5 44.5l1.5-2 1.5 2 1.5-2 1.5 2" fill="none" stroke="#3a7bd5" stroke-width="0.9"/>
</g>
<!-- window buttons glyphs -->
<rect x="964" y="18" width="7" height="3" fill="#54548c"/><rect x="964" y="21" width="7" height="1" fill="#fff"/>
<rect x="987.5" y="11.5" width="10" height="10" fill="none" stroke="#2a2a5a" stroke-width="1.4"/>
<rect x="987" y="11" width="11" height="3" fill="#2a2a5a"/>
<path d="M1011 10l10 11M1021 10l-10 11" stroke="#fff" stroke-width="2.2" stroke-linecap="round"/>
<!-- mdi glyphs -->
<rect x="979" y="42" width="6" height="2" fill="#555"/>
<path d="M998.500 39.500h5v-3h-5zM996.500 39.500h5v4h-5z" fill="#eee" stroke="#555" stroke-width="1"/>
<rect x="996" y="39" width="6" height="2" fill="#555"/>
<path d="M1015 37l7 7M1022 37l-7 7" stroke="#555" stroke-width="1.8"/>

<!-- ROW 1 -->
<!-- new chart -->
<rect x="15.500" y="57.500" width="12" height="10" rx="1" fill="#fff" stroke="#3d7fd0"/>
<rect x="16" y="58" width="11" height="2" fill="#8ab6ea"/>
<path d="M19.500 61v5M18 62.500l1.500-1.500 1.500 1.500M18 64.500l1.500 1.500 1.500-1.500" stroke="#5b88b8" stroke-width="0.8" fill="none"/>
<path d="M24.500 60.500h3v4h4v3h-4v4h-3v-4h-4v-3h4z" fill="url(#gplus)" stroke="#0b7a0b" stroke-width="0.900"/>
<!-- profiles -->
<rect x="50.500" y="57.500" width="13" height="10" rx="1" fill="#fff" stroke="#3d7fd0"/>
<rect x="51" y="58" width="12" height="2" fill="#8ab6ea"/>
<path d="M53.500 60.500v5M52.500 61.500l1-1 1 1M55 64.500h6M59.500 63l1.500 1.500-1.500 1.500M56.500 63l-1.500 1.500 1.500 1.500" stroke="#5b88b8" stroke-width="0.8" fill="none"/>
<rect x="53.500" y="62.500" width="13" height="10" rx="1" fill="#fff" stroke="#3d7fd0"/>
<rect x="54" y="63" width="12" height="2" fill="#8ab6ea"/>
<path d="M56 69.500h8M62.500 68l1.500 1.500-1.500 1.500M57.500 68l-1.500 1.500 1.500 1.500" stroke="#5b88b8" stroke-width="0.8" fill="none"/>
<!-- market watch -->
<rect x="94.500" y="57.500" width="15" height="14" rx="1.500" fill="#fff" stroke="#4a8fe0" stroke-width="1.4"/>
<path d="M96.500 64.500l3.500-4 3.500 4h-2v2.500h-3v-2.500z" fill="#1fa01f" stroke="#0c7a0c" stroke-width="0.6"/>
<path d="M100.500 66l0 0M100.500 66.500h2v-2.500h3v2.500h2l-3.500 4z" fill="#e8502a" stroke="#b8360f" stroke-width="0.6"/>
<path d="M104 60.500h4M104 62.500h4M96 68.500h3M96 70h3" stroke="#d8d8d8" stroke-width="0.6"/>
<!-- crosshair -->
<circle cx="130.500" cy="65.500" r="5" fill="none" stroke="#555" stroke-width="1.200"/>
<path d="M130.500 58v5M130.500 68v5M123 65.500h5M133 65.500h5" stroke="#555" stroke-width="1.200"/>
<!-- folder star -->
<path d="M149.500 59.500h3l1 1.500h5.500v6h-9.500z" fill="#f7df7a" stroke="#c9a227" stroke-width="1"/>
<path d="M149.500 62h9.500" stroke="#fff2b0" stroke-width="1"/>
<path d="M152.500 68v5" stroke="#333" stroke-width="1" stroke-dasharray="1 1"/>
<path d="M161.500 61l1.800 3.700 4 .5-3 2.800.8 4-3.600-2-3.600 2 .8-4-3-2.800 4-.5z" fill="#ffe45a" stroke="#c79a14" stroke-width="1"/>
<!-- terminal -->
<rect x="178.500" y="58.500" width="15" height="13" rx="1.500" fill="#fff" stroke="#2f74cf" stroke-width="1.600"/>
<rect x="179.500" y="59.500" width="3" height="11" fill="#2f74cf"/>
<path d="M184 61.500h8M184 64h8M184 66.500h8M184 69h8" stroke="#a9c3ee" stroke-width="0.7"/>
<path d="M183 61h1v1h-1zM183 66h1v1h-1z" fill="#e00" stroke="#e00" stroke-width="0.5"/>
<path d="M183 63.500h1v1h-1zM181 60.500h1v1h-1z" fill="#000"/>
<!-- tester -->
<rect x="206.500" y="57.500" width="11" height="12" fill="#f4f2ea" stroke="#c8c2ae"/>
<path d="M209.500 59v6M212.500 59v6M208 62h6" stroke="#777" stroke-width="0.8"/>
<circle cx="214.500" cy="66" r="4.300" fill="#dfeafa" fill-opacity="0.85" stroke="#3d7fd0" stroke-width="1.200"/>
<path d="M217.800 69.300l5 4.500" stroke="#d9a32a" stroke-width="2.200" stroke-linecap="round"/>
<!-- new order -->
<path d="M243.500 57.500h7l3.500 3.500v9h-10.500z" fill="#fdfdfd" stroke="#8a8a8a"/>
<path d="M250.500 57.500v3.500h3.500" fill="#e8e8e8" stroke="#8a8a8a" stroke-width="0.8"/>
<path d="M245.500 60.500h3M245.500 62.500h6M245.500 64.500h4" stroke="#666" stroke-width="0.9"/>
<path d="M251.500 63.500h3v4h4v3h-4v4h-3v-4h-4v-3h4z" fill="url(#gplus)" stroke="#0b7a0b" stroke-width="0.900"/>
<!-- diamond -->
<path d="M343.500 57.500l7.500 7.500-7.500 7.500-7.500-7.500z" fill="#ffe36a" stroke="#c9991a" stroke-width="1.600" stroke-linejoin="round"/>
<path d="M343.500 60.500l4.500 4.500-4.500 4.500-4.500-4.500z" fill="#fff3a8" stroke="none"/>
<path d="M343.500 61v6" stroke="#5a3a1a" stroke-width="1.400"/><circle cx="343.500" cy="69" r="0.9" fill="#5a3a1a"/>
<path d="M339 65h9" stroke="#8a6a2a" stroke-width="0.7"/>
<!-- expert -->
<path d="M364.500 64.500q6.500-3.500 13 0l-1.500 6q-5 3-10 0z" fill="#ffe05a" stroke="#c79a14" stroke-width="1"/>
<path d="M363 62.500q1-2 3.500-2 .8-3.500 4.500-3.500t4.500 3.500q2.500 0 3.500 2-4 2.500-8 2.500t-8-2.500z" fill="#5aa0e6" stroke="#2f6fc4" stroke-width="0.8"/>
<path d="M366.500 61.500q4.500 1.500 9 0" stroke="#3bb07a" stroke-width="1" fill="none"/>
<circle cx="375.500" cy="68.500" r="4" fill="#e0301a" stroke="#a01a0a" stroke-width="0.8"/>
<rect x="373.800" y="66.800" width="3.400" height="3.400" fill="#fff"/>

<!-- chart type icons -->
<g stroke="#555" stroke-width="1.200" fill="none">
<path d="M526.500 59.500v13.500M524 71.500h14M525 61l1.500-1.800 1.500 1.800M536.500 70l1.800 1.500-1.800 1.500"/>
<path d="M554.500 59.500v13.500M552 71.500h14M553 61l1.500-1.800 1.500 1.800M564.500 70l1.800 1.500-1.800 1.500"/>
<path d="M582.500 59.500v13.500M580 71.500h14M581 61l1.500-1.800 1.500 1.800M592.500 70l1.800 1.500-1.800 1.500"/>
<path d="M682.500 59.500v13.500M680 71.500h14M681 61l1.500-1.800 1.500 1.800M692.500 70l1.800 1.500-1.800 1.500"/>
<path d="M710.500 59.500v13.500M708 71.500h14M709 61l1.500-1.800 1.500 1.800M720.500 70l1.800 1.500-1.800 1.500"/>
</g>
<path d="M530.500 68.500h2v-7.500h2" stroke="#1aa01a" stroke-width="1.400" fill="none"/>
<path d="M560.500 57.500v12" stroke="#0b7a0b" stroke-width="1.200"/><rect x="558.500" y="59.500" width="4" height="7" fill="#22d022" stroke="#0b8a0b"/>
<path d="M582.500 69q4-8 7-7t4 5" stroke="#555" stroke-width="1.200" fill="none"/><path d="M585 65q3-4 5.500-3" stroke="#1aa01a" stroke-width="1.200" fill="none"/>
<!-- zoom in/out -->
<circle cx="620" cy="63" r="5.200" fill="url(#glens)" stroke="#3d7fd0" stroke-width="1.300"/>
<path d="M617 63h6M620 60v6" stroke="#3a8a9a" stroke-width="1.600"/>
<path d="M624 67.300l5 4.700" stroke="#d9b32a" stroke-width="2.400" stroke-linecap="round"/>
<circle cx="648" cy="63" r="5.200" fill="url(#glens)" stroke="#3d7fd0" stroke-width="1.300"/>
<path d="M645 63h6" stroke="#3a8a9a" stroke-width="1.600"/>
<path d="M652 67.300l5 4.700" stroke="#d9b32a" stroke-width="2.400" stroke-linecap="round"/>
<!-- autoscroll / shift -->
<path d="M687.500 61.500l4 3.300-4 3.300z" fill="#5aea5a" stroke="#0b8a0b" stroke-width="1"/>
<path d="M716.500 59.500v9.500" stroke="#2a6ab0" stroke-width="1.400"/>
<path d="M722 64.500h-4M720 62.500l-2.200 2 2.200 2" stroke="#c0391a" stroke-width="1.200" fill="none"/>
<!-- indicators -->
<path d="M743.500 57.500h7l3.500 3.500v9h-10.500z" fill="#fdfdfd" stroke="#8a8a8a"/>
<path d="M750.500 57.500v3.500h3.500" fill="#e8e8e8" stroke="#8a8a8a" stroke-width="0.8"/>
<path d="M748 60q-1.500 0-1.500 2v5M745.500 63.500h3" stroke="#444" stroke-width="1" fill="none"/>
<path d="M751.500 63.500h3v4h4v3h-4v4h-3v-4h-4v-3h4z" fill="url(#gplus)" stroke="#0b7a0b" stroke-width="0.900"/>
<!-- clock -->
<circle cx="785" cy="65" r="7" fill="#f6f6f2" stroke="#2f74cf" stroke-width="2.200"/>
<path d="M785 60.500v4.500h3.500" stroke="#333" stroke-width="1.100" fill="none"/>
<!-- templates -->
<rect x="812.500" y="58.500" width="15" height="13" fill="#fff" stroke="#3d7fd0" stroke-width="1.400"/>
<rect x="813" y="59" width="14" height="2" fill="#8ab6ea"/>
<path d="M813 65.500h14" stroke="#3d7fd0" stroke-width="0.8"/>
<path d="M815 64l2.500-1 2 .8 2.500-1.800 3 .5" stroke="#a0301a" stroke-width="1.100" fill="none"/>
<path d="M815 69.500l2.500-1 2 .8 2.500-2 3 2" stroke="#1a9a2a" stroke-width="1.100" fill="none"/>

<!-- ROW 2 -->
<path d="M40.500 85v11.500l2.800-2.600 2.200 4.800 1.900-.9-2.200-4.600h3.800z" fill="#444" stroke="#444" stroke-width="0.600"/>
<path d="M72.500 85.500v15M65 92.500h15" stroke="#555" stroke-width="1"/><rect x="72" y="92" width="1" height="1" fill="#e0dfe3"/>
<path d="M108.500 86v13" stroke="#555" stroke-width="1.200"/>
<path d="M131 92.500h12" stroke="#555" stroke-width="1.200"/>
<path d="M159 98.800l11.500-12" stroke="#555" stroke-width="1.200"/>
<path d="M185 96l12-10M187 99l12-10M188.500 89.500v8M192.500 87v9M196.500 84.500v9" stroke="#555" stroke-width="1"/>
<path d="M214 85.500h13M214 89.500h13M214 92.500h13M214 96.500h8" stroke="#555" stroke-width="1" stroke-dasharray="1 1" shape-rendering="crispEdges"/>
<path d="M271.500 86.500h12v12h-12z" fill="none" stroke="#555" stroke-width="1" stroke-dasharray="1 1" shape-rendering="crispEdges"/>
<path d="M299 89.500l3.500-3.500 3.500 3.500zM305 95.500l3.500 3.500 3.500-3.500z" fill="#555"/>
<path d="M300 92.500l2.500 3 5-6" stroke="#555" stroke-width="1.300" fill="none"/>
<g font-family="Liberation Sans, sans-serif" font-weight="bold" fill="#555">
<text x="196" y="101" font-size="6.500">E</text><text x="223.500" y="101" font-size="6.500">F</text>
<text x="244.500" y="96.500" font-size="11.500" font-weight="normal" fill="#666">A</text>
<text x="273.800" y="96.500" font-size="11" fill="#666">T</text>
</g>
</svg>

<svg width="1032" height="30" viewBox="0 716 1032 30" style="left:0;top:716px" shape-rendering="crispEdges">
<g fill="#6b8e0a">
<rect x="872" y="727" width="2" height="9"/><rect x="875" y="727" width="2" height="8"/><rect x="877.500" y="727" width="2" height="7"/><rect x="880" y="727" width="2" height="6"/><rect x="882.500" y="727" width="2" height="5"/><rect x="885" y="727" width="2" height="4"/><rect x="887.500" y="727" width="2" height="3"/><rect x="890" y="727" width="2" height="2"/><rect x="893" y="727" width="2" height="1"/>
</g>
<g fill="#b41414">
<rect x="872" y="737" width="2" height="2"/><rect x="875" y="736" width="2" height="3"/><rect x="877.500" y="735" width="2" height="4"/><rect x="880" y="734" width="2" height="5"/><rect x="882.500" y="733" width="2" height="6"/><rect x="885" y="732" width="2" height="7"/><rect x="887.500" y="731" width="2" height="8"/><rect x="890" y="730" width="2" height="9"/><rect x="893" y="729" width="2" height="10"/>
</g>
<g stroke="#9a9a9a" stroke-width="1" shape-rendering="auto"><path d="M1015 741l12-12M1019 741l8-8M1023 741l4-4"/></g>
<g stroke="#fff" stroke-width="1" shape-rendering="auto"><path d="M1016 741l11-11M1020 741l7-7M1024 741l3-3"/></g>
</svg>

</body></html>
